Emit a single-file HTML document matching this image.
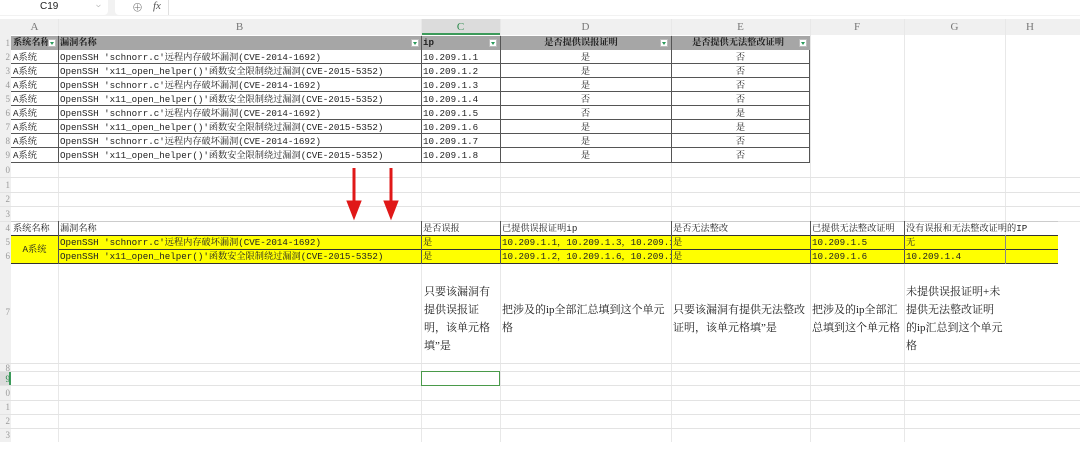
<!DOCTYPE html>
<html><head><meta charset="utf-8">
<style>
*{margin:0;padding:0;box-sizing:border-box}
body{width:1080px;height:452px;overflow:hidden;background:#fff;position:relative;font-family:"Liberation Mono","Noto Serif CJK SC",monospace;font-size:9.2px;color:#222}
.a{position:absolute}
.h{position:absolute;left:0;right:0;height:1px;background:#e3e3e3}
.v{position:absolute;top:19px;bottom:10px;width:1px;background:#e8e8e8}
.c{position:absolute;white-space:nowrap;overflow:hidden;line-height:15px;padding-left:2px}
.ctr{text-align:center;padding:0}
.fl{position:absolute;width:8px;height:8px;background:#fff;border:1px solid #bbb;top:39px}
.fl:after{content:"";position:absolute;left:1px;top:2px;border-left:2px solid transparent;border-right:2px solid transparent;border-top:3px solid #2a9a5a}
.rn{position:absolute;left:0;width:10px;font-size:9px;color:#999;text-align:right;line-height:14px;font-family:"Liberation Serif",serif}
.cl{position:absolute;top:19px;height:16px;line-height:17px;text-align:center;color:#777;font-size:11px;font-family:"Liberation Serif",serif}
.n{position:absolute;line-height:18px;font-size:11px;font-family:"Liberation Serif","Noto Serif CJK SC",serif}
</style></head><body>
<div class="a" style="left:0;top:0;width:1080px;height:16px;background:#f2f2f2"></div>
<div class="a" style="left:0;top:0;width:108px;height:15px;background:#fff;border-radius:0 0 4px 0"></div>
<div class="a" style="left:40px;top:0;font-family:'Liberation Sans',sans-serif;font-size:10px;line-height:14px">C19</div>
<div class="a" style="left:96px;top:0;font-size:8px;color:#888;line-height:12px">⌵</div>
<div class="a" style="left:115px;top:0;width:965px;height:15px;background:#fff;border-radius:0 0 0 4px"></div>
<div class="a" style="left:132px;top:-1px;font-size:11px;color:#666">⊕</div>
<div class="a" style="left:153px;top:0;font-style:italic;font-size:11px;color:#555;line-height:13px;font-family:'Liberation Serif',serif">fx</div>
<div class="a" style="left:168px;top:0;width:1px;height:15px;background:#e0e0e0"></div>
<div class="a" style="left:0;top:19px;width:1080px;height:16px;background:#f0f0f0"></div>
<div class="a" style="left:0;top:19px;width:11px;height:433px;background:#f0f0f0"></div>
<div class="a" style="left:421px;top:19px;width:79px;height:16px;background:#dcdcdc;border-bottom:2px solid #3c9a5a"></div>
<div class="cl" style="left:11px;width:47px">A</div>
<div class="cl" style="left:58px;width:363px">B</div>
<div class="cl" style="left:421px;width:79px;color:#2a8a4a">C</div>
<div class="cl" style="left:500px;width:171px">D</div>
<div class="cl" style="left:671px;width:139px">E</div>
<div class="cl" style="left:810px;width:94px">F</div>
<div class="cl" style="left:904px;width:101px">G</div>
<div class="cl" style="left:1005px;width:50px">H</div>
<div class="a" style="left:0;top:371px;width:11px;height:15px;background:#dcdcdc;border-right:2px solid #3c9a5a"></div>
<div class="v" style="left:58px"></div><div class="v" style="left:421px"></div><div class="v" style="left:500px"></div>
<div class="v" style="left:671px"></div><div class="v" style="left:810px"></div><div class="v" style="left:904px"></div>
<div class="v" style="left:1005px;bottom:200px"></div>
<div class="h" style="top:177px"></div><div class="h" style="top:192px"></div><div class="h" style="top:206px"></div>
<div class="h" style="top:221px"></div><div class="h" style="top:363px"></div><div class="h" style="top:371px"></div>
<div class="h" style="top:385px"></div><div class="h" style="top:400px"></div><div class="h" style="top:414px"></div><div class="h" style="top:428px"></div>
<div class="a" style="left:0;top:442px;width:1080px;height:10px;background:#fff"></div>
<div class="a" style="left:11px;top:36px;width:799px;height:14px;background:#a6a6a6"></div>
<div class="c" style="left:11px;top:36px;width:37px;font-weight:bold;line-height:14px">系统名称</div>
<div class="fl" style="left:48px"></div>
<div class="c" style="left:58px;top:36px;font-weight:bold;line-height:14px">漏洞名称</div>
<div class="fl" style="left:411px"></div>
<div class="c" style="left:421px;top:36px;font-weight:bold;line-height:14px">ip</div>
<div class="fl" style="left:489px"></div>
<div class="c ctr" style="left:500px;top:36px;width:162px;font-weight:bold;line-height:14px">是否提供误报证明</div>
<div class="fl" style="left:660px"></div>
<div class="c ctr" style="left:671px;top:36px;width:134px;font-weight:bold;line-height:14px">是否提供无法整改证明</div>
<div class="fl" style="left:799px"></div>
<div class="a" style="left:11px;top:50px;width:799px;height:113px;border-bottom:1.5px solid #555;border-right:1px solid #555;background:#fff"></div>
<div class="a" style="left:58px;top:36px;width:1px;height:127px;background:#555"></div>
<div class="a" style="left:421px;top:36px;width:1px;height:127px;background:#555"></div>
<div class="a" style="left:500px;top:36px;width:1px;height:127px;background:#555"></div>
<div class="a" style="left:671px;top:36px;width:1px;height:127px;background:#555"></div>
<svg class="a" style="left:340px;top:165px" width="70" height="58">
<g fill="#e01818" stroke="#e01818">
<line x1="14" y1="3" x2="14" y2="40" stroke-width="3"/><polygon points="7,36 21,36 14,54" stroke-width="1"/>
<line x1="51" y1="3" x2="51" y2="40" stroke-width="3"/><polygon points="44,36 58,36 51,54" stroke-width="1"/>
</g></svg>
<div class="c" style="left:11px;top:221px">系统名称</div>
<div class="c" style="left:58px;top:221px">漏洞名称</div>
<div class="c" style="left:421px;top:221px">是否误报</div>
<div class="c" style="left:500px;top:221px">已提供误报证明ip</div>
<div class="c" style="left:671px;top:221px">是否无法整改</div>
<div class="c" style="left:810px;top:221px;width:94px">已提供无法整改证明</div>
<div class="c" style="left:904px;top:221px">没有误报和无法整改证明的IP</div>
<div class="a" style="left:11px;top:221px;width:1047px;height:1px;background:#ccc"></div>
<div class="a" style="left:11px;top:235px;width:1047px;height:29px;background:#ffff00;border-top:1px solid #333;border-bottom:1.5px solid #333"></div>
<div class="a" style="left:58px;top:249px;width:1000px;height:1px;background:#333"></div>
<div class="a" style="left:58px;top:221px;width:1px;height:43px;background:#555"></div>
<div class="a" style="left:421px;top:221px;width:1px;height:43px;background:#555"></div>
<div class="a" style="left:500px;top:221px;width:1px;height:43px;background:#555"></div>
<div class="a" style="left:671px;top:221px;width:1px;height:43px;background:#555"></div>
<div class="a" style="left:810px;top:221px;width:1px;height:43px;background:#555"></div>
<div class="a" style="left:904px;top:221px;width:1px;height:43px;background:#555"></div>
<div class="a" style="left:1005px;top:235px;width:1px;height:29px;background:#888"></div>
<div class="c ctr" style="left:11px;top:242px;width:47px">A系统</div>
<div class="c" style="left:58px;top:235px">OpenSSH 'schnorr.c'远程内存破坏漏洞(CVE-2014-1692)</div>
<div class="c" style="left:58px;top:249px">OpenSSH 'x11_open_helper()'函数安全限制绕过漏洞(CVE-2015-5352)</div>
<div class="c" style="left:421px;top:235px">是</div><div class="c" style="left:421px;top:249px">是</div>
<div class="c" style="left:500px;top:235px;width:171px">10.209.1.1，10.209.1.3，10.209.1.7</div>
<div class="c" style="left:500px;top:249px;width:171px">10.209.1.2，10.209.1.6，10.209.1.8</div>
<div class="c" style="left:671px;top:235px">是</div><div class="c" style="left:671px;top:249px">是</div>
<div class="c" style="left:810px;top:235px">10.209.1.5</div><div class="c" style="left:810px;top:249px">10.209.1.6</div>
<div class="c" style="left:904px;top:235px">无</div><div class="c" style="left:904px;top:249px">10.209.1.4</div>
<div class="n" style="left:424px;top:283px;width:72px">只要该漏洞有提供误报证明，该单元格填”是</div>
<div class="n" style="left:502px;top:301px;width:168px">把涉及的ip全部汇总填到这个单元格</div>
<div class="n" style="left:673px;top:301px;width:136px">只要该漏洞有提供无法整改证明，该单元格填”是</div>
<div class="n" style="left:812px;top:301px;width:94px">把涉及的ip全部汇总填到这个单元格</div>
<div class="n" style="left:906px;top:283px;width:98px">未提供误报证明+未提供无法整改证明的ip汇总到这个单元格</div>
<div class="a" style="left:421px;top:371px;width:79px;height:15px;border:1.5px solid #4a9a4a"></div>
<div class="rn" style="top:36px">1</div><div class="rn" style="top:50px">2</div><div class="rn" style="top:64px">3</div>
<div class="rn" style="top:78px">4</div><div class="rn" style="top:92px">5</div><div class="rn" style="top:106px">6</div>
<div class="rn" style="top:120px">7</div><div class="rn" style="top:134px">8</div><div class="rn" style="top:148px">9</div>
<div class="rn" style="top:163px">0</div><div class="rn" style="top:178px">1</div><div class="rn" style="top:192px">2</div>
<div class="rn" style="top:207px">3</div><div class="rn" style="top:221px">4</div><div class="rn" style="top:235px">5</div>
<div class="rn" style="top:249px">6</div><div class="rn" style="top:305px">7</div><div class="rn" style="top:361px">8</div>
<div class="rn" style="top:372px;color:#2a8a4a">9</div><div class="rn" style="top:386px">0</div><div class="rn" style="top:400px">1</div>
<div class="rn" style="top:414px">2</div><div class="rn" style="top:428px">3</div>
<div class="a" style="left:11px;top:50px;width:799px">
<div class="c" style="position:relative;height:14px;border-bottom:1px solid #555;display:flex;padding:0"><span style="width:47px;padding-left:2px">A系统</span><span style="width:363px;padding-left:2px">OpenSSH 'schnorr.c'远程内存破坏漏洞(CVE-2014-1692)</span><span style="width:79px;padding-left:2px">10.209.1.1</span><span style="width:171px;text-align:center">是</span><span style="width:139px;text-align:center">否</span></div>
<div class="c" style="position:relative;height:14px;border-bottom:1px solid #555;display:flex;padding:0"><span style="width:47px;padding-left:2px">A系统</span><span style="width:363px;padding-left:2px">OpenSSH 'x11_open_helper()'函数安全限制绕过漏洞(CVE-2015-5352)</span><span style="width:79px;padding-left:2px">10.209.1.2</span><span style="width:171px;text-align:center">是</span><span style="width:139px;text-align:center">否</span></div>
<div class="c" style="position:relative;height:14px;border-bottom:1px solid #555;display:flex;padding:0"><span style="width:47px;padding-left:2px">A系统</span><span style="width:363px;padding-left:2px">OpenSSH 'schnorr.c'远程内存破坏漏洞(CVE-2014-1692)</span><span style="width:79px;padding-left:2px">10.209.1.3</span><span style="width:171px;text-align:center">是</span><span style="width:139px;text-align:center">否</span></div>
<div class="c" style="position:relative;height:14px;border-bottom:1px solid #555;display:flex;padding:0"><span style="width:47px;padding-left:2px">A系统</span><span style="width:363px;padding-left:2px">OpenSSH 'x11_open_helper()'函数安全限制绕过漏洞(CVE-2015-5352)</span><span style="width:79px;padding-left:2px">10.209.1.4</span><span style="width:171px;text-align:center">否</span><span style="width:139px;text-align:center">否</span></div>
<div class="c" style="position:relative;height:14px;border-bottom:1px solid #555;display:flex;padding:0"><span style="width:47px;padding-left:2px">A系统</span><span style="width:363px;padding-left:2px">OpenSSH 'schnorr.c'远程内存破坏漏洞(CVE-2014-1692)</span><span style="width:79px;padding-left:2px">10.209.1.5</span><span style="width:171px;text-align:center">否</span><span style="width:139px;text-align:center">是</span></div>
<div class="c" style="position:relative;height:14px;border-bottom:1px solid #555;display:flex;padding:0"><span style="width:47px;padding-left:2px">A系统</span><span style="width:363px;padding-left:2px">OpenSSH 'x11_open_helper()'函数安全限制绕过漏洞(CVE-2015-5352)</span><span style="width:79px;padding-left:2px">10.209.1.6</span><span style="width:171px;text-align:center">是</span><span style="width:139px;text-align:center">是</span></div>
<div class="c" style="position:relative;height:14px;border-bottom:1px solid #555;display:flex;padding:0"><span style="width:47px;padding-left:2px">A系统</span><span style="width:363px;padding-left:2px">OpenSSH 'schnorr.c'远程内存破坏漏洞(CVE-2014-1692)</span><span style="width:79px;padding-left:2px">10.209.1.7</span><span style="width:171px;text-align:center">是</span><span style="width:139px;text-align:center">否</span></div>
<div class="c" style="position:relative;height:14px;display:flex;padding:0"><span style="width:47px;padding-left:2px">A系统</span><span style="width:363px;padding-left:2px">OpenSSH 'x11_open_helper()'函数安全限制绕过漏洞(CVE-2015-5352)</span><span style="width:79px;padding-left:2px">10.209.1.8</span><span style="width:171px;text-align:center">是</span><span style="width:139px;text-align:center">否</span></div>
</div>
</body></html>
